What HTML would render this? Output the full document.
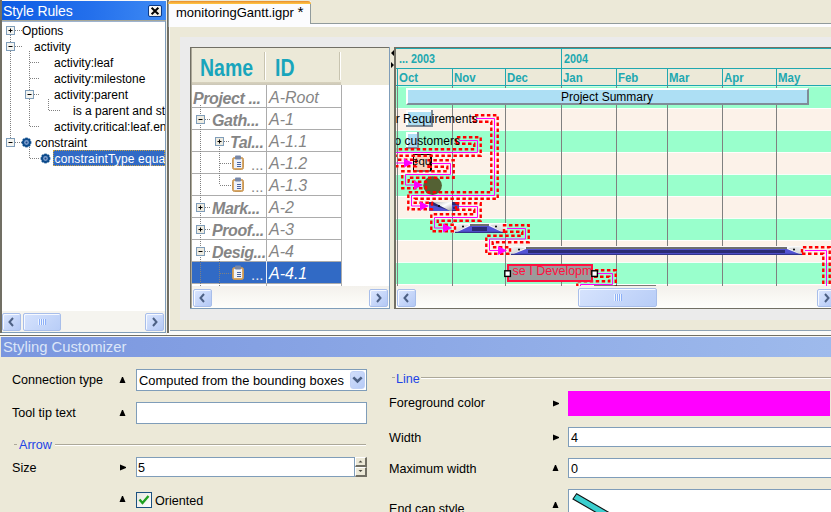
<!DOCTYPE html>
<html><head><meta charset="utf-8">
<style>
*{margin:0;padding:0;box-sizing:border-box}
html,body{width:831px;height:512px;overflow:hidden;background:#ECE9D8;font-family:"Liberation Sans",sans-serif}
.a{position:absolute}
.t{position:absolute;white-space:pre;line-height:normal}
</style></head><body>
<div class="a" style="left:0;top:0;width:831px;height:512px;overflow:hidden">


<!-- ===== LEFT PANEL: Style Rules ===== -->
<div class="a" style="left:0;top:0;width:2px;height:333px;background:#716F64"></div>
<div class="a" style="left:0;top:333px;width:170px;height:2px;background:#FCFCFA"></div>
<div class="a" style="left:2px;top:0;width:164px;height:1px;background:#F8F8F8"></div>
<div class="a" style="left:2px;top:1px;width:164px;height:19px;background:linear-gradient(to right,#0D5CE4,#2470EC 55%,#3E8AF4)"></div>
<div class="t" style="left:3px;top:3px;font-size:14px;color:#fff;letter-spacing:-0.1px">Style Rules</div>
<div class="a" style="left:148px;top:5px;width:14px;height:12px;background:linear-gradient(135deg,#FFFFFF,#ECE8DA);border:1.5px solid #0C3A86;border-radius:2px"></div>
<svg class="a" style="left:148px;top:5px" width="14" height="12"><path d="M3.6 2.8 L10.4 9.2 M10.4 2.8 L3.6 9.2" stroke="#000" stroke-width="2"/></svg>
<div class="a" style="left:2px;top:20px;width:164px;height:1px;background:#A8A898"></div>
<div class="a" style="left:2px;top:21px;width:164px;height:1px;background:#9DB3D0"></div>
<div class="a" style="left:2px;top:22px;width:163px;height:289px;background:#fff"></div>
<div class="a" style="left:165px;top:21px;width:1px;height:312px;background:#7F9DB9"></div>
<div class="a" style="left:166px;top:0;width:1px;height:335px;background:#F0EFE8"></div>
<div class="a" style="left:167px;top:0;width:2px;height:333px;background:#716F64"></div>
<div class="a" style="left:169px;top:0;width:1px;height:335px;background:#FBFBF8"></div>

<!-- tree -->
<svg class="a" style="left:2px;top:22px" width="163" height="150">
 <g stroke="#808080" stroke-width="1" stroke-dasharray="1 1" fill="none">
  <path d="M8.5 13 V121"/>
  <path d="M13 8.5 H20"/>
  <path d="M13 24.5 H20"/>
  <path d="M27.5 29 V105"/>
  <path d="M28 40.5 H38 M28 56.5 H38 M32 72.5 H38 M28 104.5 H38"/>
  <path d="M46.5 77 V89 M47 88.5 H58"/>
  <path d="M13 120.5 H20"/>
  <path d="M27.5 125 V137 M28 136.5 H38"/>
 </g>
 <!-- expand boxes -->
 <g>
  <rect x="4.5" y="4.5" width="8" height="8" fill="#F4F4F0" stroke="#7F9DB9"/>
  <path d="M6.5 8.5 H10.5 M8.5 6.5 V10.5" stroke="#000"/>
  <rect x="4.5" y="20.5" width="8" height="8" fill="#F4F4F0" stroke="#7F9DB9"/>
  <path d="M6.5 24.5 H10.5" stroke="#000"/>
  <rect x="23.5" y="68.5" width="8" height="8" fill="#F4F4F0" stroke="#7F9DB9"/>
  <path d="M25.5 72.5 H29.5" stroke="#000"/>
  <rect x="4.5" y="116.5" width="8" height="8" fill="#F4F4F0" stroke="#7F9DB9"/>
  <path d="M6.5 120.5 H10.5" stroke="#000"/>
 </g>
 <!-- gear icons -->
 <g transform="translate(24.5,120.5)"><rect x="-1.2" y="-4.7" width="2.4" height="9.4" fill="#0E4C8C" transform="rotate(0)"/><rect x="-1.2" y="-4.7" width="2.4" height="9.4" fill="#0E4C8C" transform="rotate(45)"/><rect x="-1.2" y="-4.7" width="2.4" height="9.4" fill="#0E4C8C" transform="rotate(90)"/><rect x="-1.2" y="-4.7" width="2.4" height="9.4" fill="#0E4C8C" transform="rotate(135)"/><rect x="-1.2" y="-4.7" width="2.4" height="9.4" fill="#0E4C8C" transform="rotate(180)"/><rect x="-1.2" y="-4.7" width="2.4" height="9.4" fill="#0E4C8C" transform="rotate(225)"/><rect x="-1.2" y="-4.7" width="2.4" height="9.4" fill="#0E4C8C" transform="rotate(270)"/><rect x="-1.2" y="-4.7" width="2.4" height="9.4" fill="#0E4C8C" transform="rotate(315)"/><circle r="3.6" fill="#0E4C8C"/><circle r="2.4" fill="#7F9FCF"/><circle r="1" fill="#1E4A88"/></g>
 <g transform="translate(43.5,136.5)"><rect x="-1.2" y="-4.7" width="2.4" height="9.4" fill="#0E4C8C" transform="rotate(0)"/><rect x="-1.2" y="-4.7" width="2.4" height="9.4" fill="#0E4C8C" transform="rotate(45)"/><rect x="-1.2" y="-4.7" width="2.4" height="9.4" fill="#0E4C8C" transform="rotate(90)"/><rect x="-1.2" y="-4.7" width="2.4" height="9.4" fill="#0E4C8C" transform="rotate(135)"/><rect x="-1.2" y="-4.7" width="2.4" height="9.4" fill="#0E4C8C" transform="rotate(180)"/><rect x="-1.2" y="-4.7" width="2.4" height="9.4" fill="#0E4C8C" transform="rotate(225)"/><rect x="-1.2" y="-4.7" width="2.4" height="9.4" fill="#0E4C8C" transform="rotate(270)"/><rect x="-1.2" y="-4.7" width="2.4" height="9.4" fill="#0E4C8C" transform="rotate(315)"/><circle r="3.6" fill="#0E4C8C"/><circle r="2.4" fill="#7F9FCF"/><circle r="1" fill="#1E4A88"/></g>
</svg>
<div class="a" style="left:2px;top:22px;width:163px;height:289px;overflow:hidden">
<div class="t" style="left:20px;top:2px;font-size:12px;color:#000">Options</div>
<div class="t" style="left:32px;top:18px;font-size:12px;color:#000">activity</div>
<div class="t" style="left:52px;top:34px;font-size:12px;color:#000">activity:leaf</div>
<div class="t" style="left:52px;top:50px;font-size:12px;color:#000">activity:milestone</div>
<div class="t" style="left:52px;top:66px;font-size:12px;color:#000">activity:parent</div>
<div class="t" style="left:71px;top:82px;font-size:12px;color:#000">is a parent and st</div>
<div class="t" style="left:52px;top:98px;font-size:12px;color:#000">activity.critical:leaf.end</div>
<div class="t" style="left:33px;top:114px;font-size:12px;color:#000">constraint</div>
<div class="a" style="left:51px;top:128px;width:112px;height:16px;background:#316AC5;border:1px dotted #C8A040"></div>
<div class="t" style="left:52.5px;top:130px;font-size:12px;letter-spacing:0.15px;color:#fff">constraintType equals</div>
</div>
<div class="a" style="left:166px;top:0;width:1px;height:335px;background:#F0EFE8"></div>
<div class="a" style="left:2px;top:22px;width:2px;height:289px;background:#fff"></div>

<!-- left scrollbar -->
<div class="a" style="left:2px;top:311px;width:163px;height:21px;background:#F5F4EF"></div>
<div class="a" style="left:2px;top:313px;width:19px;height:18px;background:linear-gradient(135deg,#DCE7FE,#B3C8F5);border:1px solid #A8BEEA;border-radius:2px;box-shadow:inset 1px 1px 0 #F6F9FF"></div>
<svg class="a" style="left:2px;top:313px" width="19" height="18"><path d="M11 5 L7.5 9 L11 13" stroke="#4D6185" stroke-width="2" fill="none"/></svg>
<div class="a" style="left:23px;top:313px;width:38px;height:18px;background:linear-gradient(135deg,#D6E3FD,#B8CDF7);border:1px solid #A8BEEA;border-radius:2px;box-shadow:inset 1px 1px 0 #F6F9FF"></div>
<svg class="a" style="left:23px;top:313px" width="38" height="18"><path d="M15.5 6 V12 M17.5 6 V12 M19.5 6 V12 M21.5 6 V12" stroke="#EEF4FE" stroke-width="1"/><path d="M16.5 6 V12 M18.5 6 V12 M20.5 6 V12 M22.5 6 V12" stroke="#8CB0F8" stroke-width="1"/></svg>
<div class="a" style="left:145px;top:313px;width:19px;height:18px;background:linear-gradient(135deg,#DCE7FE,#B3C8F5);border:1px solid #A8BEEA;border-radius:2px;box-shadow:inset 1px 1px 0 #F6F9FF"></div>
<svg class="a" style="left:145px;top:313px" width="19" height="18"><path d="M8 5 L11.5 9 L8 13" stroke="#4D6185" stroke-width="2" fill="none"/></svg>
<div class="a" style="left:2px;top:332px;width:164px;height:1px;background:#7F9DB9"></div>

<!-- ===== TAB AREA ===== -->
<div class="a" style="left:170px;top:0;width:661px;height:23px;background:#ECE9D8"></div>
<div class="a" style="left:168px;top:1px;width:143px;height:26px;background:#FCFCFE;border-left:1px solid #919B9C"></div>
<div class="a" style="left:310px;top:3px;width:1px;height:21px;background:#919B9C"></div>
<div class="a" style="left:168px;top:1px;width:143px;height:3px;background:linear-gradient(#E68B2C,#F8B240 60%,#FFC83C);border-radius:3px 3px 0 0"></div>

<div class="t" style="left:176px;top:5px;font-size:13px;color:#000">monitoringGantt.igpr</div><div class="t" style="left:297.5px;top:3px;font-size:15.5px;color:#000">*</div>
<div class="a" style="left:311px;top:23px;width:520px;height:1px;background:#919B9C"></div>
<div class="a" style="left:311px;top:24px;width:520px;height:3px;background:#FCFCFE"></div>
<div class="a" style="left:170px;top:27px;width:661px;height:303px;background:#ECE9D8"></div>
<div class="a" style="left:180px;top:37px;width:651px;height:283px;background:#EBEBEB"></div>
<div class="a" style="left:170px;top:330px;width:661px;height:1px;background:#8DA2B4"></div>
<div class="a" style="left:170px;top:331px;width:661px;height:4px;background:#FBFBF8"></div>
<div class="a" style="left:0;top:335px;width:831px;height:1px;background:#716F64"></div>
<div class="a" style="left:0;top:336px;width:831px;height:1px;background:#F8F8F4"></div>

<!-- ===== TABLE ===== -->
<div class="a" style="left:190px;top:47px;width:200px;height:262px;background:#fff;border-top:1px solid #716F64;border-left:1px solid #716F64;"></div>
<div class="a" style="left:191px;top:48px;width:1px;height:260px;background:#ACA899"></div>
<div class="a" style="left:389px;top:47px;width:1px;height:262px;background:#7F9DB9"></div>
<div class="a" style="left:190px;top:308px;width:200px;height:1px;background:#7F9DB9"></div>
<!-- header -->
<div class="a" style="left:192px;top:48px;width:197px;height:37px;background:#ECE9D8"></div>
<div class="a" style="left:192px;top:82px;width:149px;height:3px;background:linear-gradient(#D8D2BD,#CBC7B8)"></div>
<div class="a" style="left:264px;top:52px;width:1px;height:28px;background:#C8C4B0"></div>
<div class="a" style="left:265px;top:52px;width:1px;height:28px;background:#fff"></div>
<div class="a" style="left:339px;top:52px;width:1px;height:28px;background:#C8C4B0"></div>
<div class="a" style="left:340px;top:52px;width:1px;height:28px;background:#fff"></div>
<div class="t" style="left:200px;top:55px;font-size:23.5px;font-weight:bold;color:#18A5BC;transform:scaleX(0.83);transform-origin:0 0">Name</div>
<div class="t" style="left:275px;top:55px;font-size:23.5px;font-weight:bold;color:#18A5BC;transform:scaleX(0.83);transform-origin:0 0">ID</div>


<div class="a" style="left:192px;top:85px;width:197px;height:201px;overflow:hidden;background:#fff">
<div class="a" style="left:0;top:176px;width:149px;height:22px;background:#316AC5"></div>
<div class="a" style="left:0;top:22px;width:150px;height:1px;background:#ACACAC"></div>
<div class="a" style="left:0;top:44px;width:150px;height:1px;background:#ACACAC"></div>
<div class="a" style="left:0;top:66px;width:150px;height:1px;background:#ACACAC"></div>
<div class="a" style="left:0;top:88px;width:150px;height:1px;background:#ACACAC"></div>
<div class="a" style="left:0;top:110px;width:150px;height:1px;background:#ACACAC"></div>
<div class="a" style="left:0;top:132px;width:150px;height:1px;background:#ACACAC"></div>
<div class="a" style="left:0;top:154px;width:150px;height:1px;background:#ACACAC"></div>
<div class="a" style="left:0;top:176px;width:150px;height:1px;background:#ACACAC"></div>
<div class="a" style="left:0;top:198px;width:150px;height:1px;background:#ACACAC"></div>
<div class="a" style="left:74px;top:0;width:1px;height:201px;background:#ACACAC"></div>
<div class="a" style="left:149px;top:0;width:1px;height:201px;background:#ACACAC"></div>
<div class="a" style="left:74px;top:176px;width:1px;height:22px;background:#E8EEF8"></div>
<svg class="a" style="left:0;top:0" width="150" height="201">
<g stroke="#808080" stroke-dasharray="1 1" fill="none">
<path d="M8.5 20 V201"/>
<path d="M27.5 58 V100"/>
<path d="M27.5 174 V201"/>
<path d="M13 34.5 H19"/>
<path d="M32 56.5 H38"/>
<path d="M28 78.5 H39"/>
<path d="M28 100.5 H39"/>
<path d="M13 122.5 H19"/>
<path d="M13 144.5 H19"/>
<path d="M13 166.5 H19"/>
<path d="M28 188.5 H39"/>
</g>
<rect x="4.5" y="30.5" width="8" height="8" fill="#EEEBE0" stroke="#7F9DB9"/>
<path d="M6.5 34.5 H10.5" stroke="#000"/>
<rect x="23.5" y="52.5" width="8" height="8" fill="#EEEBE0" stroke="#7F9DB9"/>
<path d="M25.5 56.5 H29.5" stroke="#000"/>
<path d="M27.5 54.5 V58.5" stroke="#000"/>
<rect x="40.5" y="72.5" width="11" height="12" rx="2" fill="#D8A868" stroke="#C89858"/>
<rect x="42" y="74" width="8" height="9" fill="#EEF2FA"/>
<rect x="43" y="70.5" width="6" height="4" rx="1" fill="#7888A8"/>
<path d="M45 77.5 H49 M45 79.5 H49 M45 81.5 H49" stroke="#4A62A0"/>
<rect x="40.5" y="94.5" width="11" height="12" rx="2" fill="#D8A868" stroke="#C89858"/>
<rect x="42" y="96" width="8" height="9" fill="#EEF2FA"/>
<rect x="43" y="92.5" width="6" height="4" rx="1" fill="#7888A8"/>
<path d="M45 99.5 H49 M45 101.5 H49 M45 103.5 H49" stroke="#4A62A0"/>
<rect x="4.5" y="118.5" width="8" height="8" fill="#EEEBE0" stroke="#7F9DB9"/>
<path d="M6.5 122.5 H10.5" stroke="#000"/>
<path d="M8.5 120.5 V124.5" stroke="#000"/>
<rect x="4.5" y="140.5" width="8" height="8" fill="#EEEBE0" stroke="#7F9DB9"/>
<path d="M6.5 144.5 H10.5" stroke="#000"/>
<path d="M8.5 142.5 V146.5" stroke="#000"/>
<rect x="4.5" y="162.5" width="8" height="8" fill="#EEEBE0" stroke="#7F9DB9"/>
<path d="M6.5 166.5 H10.5" stroke="#000"/>
<rect x="40.5" y="182.5" width="11" height="12" rx="2" fill="#D8A868" stroke="#C89858"/>
<rect x="42" y="184" width="8" height="9" fill="#EEF2FA"/>
<rect x="43" y="180.5" width="6" height="4" rx="1" fill="#7888A8"/>
<path d="M45 187.5 H49 M45 189.5 H49 M45 191.5 H49" stroke="#4A62A0"/>
</svg>
<div class="t" style="left:1px;top:5px;font-size:16px;letter-spacing:-0.4px;font-weight:bold;font-style:italic;color:#858585">Project ...</div>
<div class="t" style="left:77px;top:4px;font-size:16px;font-style:italic;color:#858585">A-Root</div>
<div class="t" style="left:20px;top:27px;font-size:16px;letter-spacing:-0.4px;font-weight:bold;font-style:italic;color:#858585">Gath...</div>
<div class="t" style="left:77px;top:26px;font-size:16px;font-style:italic;color:#858585">A-1</div>
<div class="t" style="left:38px;top:49px;font-size:16px;letter-spacing:-0.4px;font-weight:bold;font-style:italic;color:#858585">Tal...</div>
<div class="t" style="left:77px;top:48px;font-size:16px;font-style:italic;color:#858585">A-1.1</div>
<div class="t" style="left:59px;top:71px;font-size:15px;color:#858585">...</div>
<div class="t" style="left:77px;top:70px;font-size:16px;font-style:italic;color:#858585">A-1.2</div>
<div class="t" style="left:59px;top:93px;font-size:15px;color:#858585">...</div>
<div class="t" style="left:77px;top:92px;font-size:16px;font-style:italic;color:#858585">A-1.3</div>
<div class="t" style="left:20px;top:115px;font-size:16px;letter-spacing:-0.4px;font-weight:bold;font-style:italic;color:#858585">Mark...</div>
<div class="t" style="left:77px;top:114px;font-size:16px;font-style:italic;color:#858585">A-2</div>
<div class="t" style="left:20px;top:137px;font-size:16px;letter-spacing:-0.4px;font-weight:bold;font-style:italic;color:#858585">Proof...</div>
<div class="t" style="left:77px;top:136px;font-size:16px;font-style:italic;color:#858585">A-3</div>
<div class="t" style="left:20px;top:159px;font-size:16px;letter-spacing:-0.4px;font-weight:bold;font-style:italic;color:#858585">Desig...</div>
<div class="t" style="left:77px;top:158px;font-size:16px;font-style:italic;color:#858585">A-4</div>
<div class="t" style="left:59px;top:181px;font-size:15px;color:#E8E8F0">...</div>
<div class="t" style="left:77px;top:180px;font-size:16px;font-style:italic;color:#fff">A-4.1</div>
</div>
<div class="a" style="left:192px;top:286px;width:197px;height:22px;background:linear-gradient(#F3F1EC,#FEFEFB)"></div>
<div class="a" style="left:193px;top:289px;width:19px;height:18px;background:linear-gradient(135deg,#DCE7FE,#B3C8F5);border:1px solid #A8BEEA;border-radius:2px;box-shadow:inset 1px 1px 0 #F6F9FF"></div>
<svg class="a" style="left:193px;top:289px" width="19" height="18"><path d="M11 5 L7.5 9 L11 13" stroke="#4D6185" stroke-width="2" fill="none"/></svg>
<div class="a" style="left:369px;top:289px;width:19px;height:18px;background:linear-gradient(135deg,#DCE7FE,#B3C8F5);border:1px solid #A8BEEA;border-radius:2px;box-shadow:inset 1px 1px 0 #F6F9FF"></div>
<svg class="a" style="left:369px;top:289px" width="19" height="18"><path d="M8 5 L11.5 9 L8 13" stroke="#4D6185" stroke-width="2" fill="none"/></svg>
<div class="a" style="left:390px;top:47px;width:4px;height:262px;background:#ECE9D8"></div>
<svg class="a" style="left:390px;top:48px" width="5" height="24"><path d="M4 2 L1 5 L4 8 Z M1 14 L4 17 L1 20 Z" fill="#000"/></svg>
<div class="a" style="left:394px;top:47px;width:437px;height:262px;background:#ECE9D8;border-top:1px solid #716F64;border-left:2px solid #716F64;border-bottom:1px solid #716F64"></div>
<svg class="a" style="left:396px;top:48px" width="435" height="38">
<rect x="0" y="0" width="435" height="38" fill="#ECE9D8"/>
<path d="M0 0.5 H435 M0 20.5 H435 M0 37.5 H435" stroke="#20A8B0"/>
<path d="M1.5 20 V38" stroke="#20A8B0"/>
<path d="M56.5 20 V38" stroke="#20A8B0"/>
<path d="M109.5 20 V38" stroke="#20A8B0"/>
<path d="M165.5 20 V38" stroke="#20A8B0"/>
<path d="M220.5 20 V38" stroke="#20A8B0"/>
<path d="M271.5 20 V38" stroke="#20A8B0"/>
<path d="M326.5 20 V38" stroke="#20A8B0"/>
<path d="M380.5 20 V38" stroke="#20A8B0"/>
<path d="M165.5 0 V20" stroke="#20A8B0"/>
<path d="M1.5 20 V38" stroke="#20A8B0"/>
</svg>
<div class="t" style="left:399px;top:51px;font-size:13px;font-weight:bold;color:#20A8B0;transform:scaleX(0.83);transform-origin:0 0">... 2003</div>
<div class="t" style="left:564px;top:51px;font-size:13px;font-weight:bold;color:#20A8B0;transform:scaleX(0.83);transform-origin:0 0">2004</div>
<div class="t" style="left:399px;top:70px;font-size:13px;font-weight:bold;color:#20A8B0;transform:scaleX(0.88);transform-origin:0 0">Oct</div>
<div class="t" style="left:454px;top:70px;font-size:13px;font-weight:bold;color:#20A8B0;transform:scaleX(0.88);transform-origin:0 0">Nov</div>
<div class="t" style="left:507px;top:70px;font-size:13px;font-weight:bold;color:#20A8B0;transform:scaleX(0.88);transform-origin:0 0">Dec</div>
<div class="t" style="left:563px;top:70px;font-size:13px;font-weight:bold;color:#20A8B0;transform:scaleX(0.88);transform-origin:0 0">Jan</div>
<div class="t" style="left:618px;top:70px;font-size:13px;font-weight:bold;color:#20A8B0;transform:scaleX(0.88);transform-origin:0 0">Feb</div>
<div class="t" style="left:669px;top:70px;font-size:13px;font-weight:bold;color:#20A8B0;transform:scaleX(0.88);transform-origin:0 0">Mar</div>
<div class="t" style="left:724px;top:70px;font-size:13px;font-weight:bold;color:#20A8B0;transform:scaleX(0.88);transform-origin:0 0">Apr</div>
<div class="t" style="left:778px;top:70px;font-size:13px;font-weight:bold;color:#20A8B0;transform:scaleX(0.88);transform-origin:0 0">May</div>
<svg class="a" style="left:396px;top:86px" width="435" height="200">
<rect x="0" y="0" width="435" height="200" fill="#FCF2E9"/>
<rect x="0" y="0" width="435" height="22" fill="#99FFCC"/>
<rect x="0" y="44" width="435" height="22" fill="#99FFCC"/>
<rect x="0" y="88" width="435" height="22" fill="#99FFCC"/>
<rect x="0" y="132" width="435" height="22" fill="#99FFCC"/>
<rect x="0" y="176" width="435" height="22" fill="#99FFCC"/>
<rect x="0" y="0" width="435" height="1" fill="#FFFFFF" opacity="0.5"/>
<rect x="0" y="22" width="435" height="1" fill="#FFFFFF" opacity="0.9"/>
<rect x="0" y="44" width="435" height="1" fill="#FFFFFF" opacity="0.9"/>
<rect x="0" y="66" width="435" height="1" fill="#FFFFFF" opacity="0.9"/>
<rect x="0" y="88" width="435" height="1" fill="#FFFFFF" opacity="0.9"/>
<rect x="0" y="110" width="435" height="1" fill="#FFFFFF" opacity="0.9"/>
<rect x="0" y="132" width="435" height="1" fill="#FFFFFF" opacity="0.9"/>
<rect x="0" y="154" width="435" height="1" fill="#FFFFFF" opacity="0.9"/>
<rect x="0" y="176" width="435" height="1" fill="#FFFFFF" opacity="0.9"/>
<rect x="0" y="198" width="435" height="1" fill="#FFFFFF" opacity="0.9"/>
<path d="M1.5 0 V200" stroke="#808080"/>
<path d="M56.5 0 V200" stroke="#808080"/>
<path d="M109.5 0 V200" stroke="#808080"/>
<path d="M165.5 0 V200" stroke="#808080"/>
<path d="M220.5 0 V200" stroke="#808080"/>
<path d="M271.5 0 V200" stroke="#808080"/>
<path d="M326.5 0 V200" stroke="#808080"/>
<path d="M380.5 0 V200" stroke="#808080"/>
</svg>
<div class="a" style="left:406px;top:88px;width:403px;height:17px;background:#ADDFF4;border-top:2px solid #fff;border-left:2px solid #fff;border-bottom:2px solid #7F8C98;border-right:2px solid #7F8C98"></div>
<div class="t" style="left:561px;top:90px;font-size:12px;color:#000">Project Summary</div>
<div class="a" style="left:396px;top:286px;width:435px;height:22px;background:linear-gradient(#F3F1EC,#FEFEFB)"></div>
<div class="a" style="left:397px;top:289px;width:19px;height:18px;background:linear-gradient(135deg,#DCE7FE,#B3C8F5);border:1px solid #A8BEEA;border-radius:2px;box-shadow:inset 1px 1px 0 #F6F9FF"></div>
<svg class="a" style="left:397px;top:289px" width="19" height="18"><path d="M11 5 L7.5 9 L11 13" stroke="#4D6185" stroke-width="2" fill="none"/></svg>
<div class="a" style="left:578px;top:288px;width:79px;height:19px;background:linear-gradient(135deg,#D6E3FD,#B8CDF7);border:1px solid #A8BEEA;border-radius:2px;box-shadow:inset 1px 1px 0 #F6F9FF"></div>
<svg class="a" style="left:578px;top:288px" width="79" height="19"><path d="M36.5 6 V13 M38.5 6 V13 M40.5 6 V13 M42.5 6 V13" stroke="#EEF4FE"/><path d="M37.5 6 V13 M39.5 6 V13 M41.5 6 V13 M43.5 6 V13" stroke="#8CB0F8"/></svg>
<div class="a" style="left:817px;top:289px;width:19px;height:18px;background:linear-gradient(135deg,#DCE7FE,#B3C8F5);border:1px solid #A8BEEA;border-radius:2px;box-shadow:inset 1px 1px 0 #F6F9FF"></div>
<svg class="a" style="left:817px;top:289px" width="19" height="18"><path d="M8 5 L11.5 9 L8 13" stroke="#4D6185" stroke-width="2" fill="none"/></svg>
<svg class="a" style="left:396px;top:86px" width="435" height="200"><g transform="translate(-396,-86)">
<rect x="406" y="110" width="27" height="17" fill="#7F8C98"/><rect x="406" y="110" width="25" height="15" fill="#fff"/><rect x="408" y="112" width="23" height="13" fill="#ADDFF4"/>
<rect x="406" y="132" width="13" height="17" fill="#7F8C98"/><rect x="406" y="132" width="11" height="15" fill="#fff"/><rect x="408" y="134" width="9" height="13" fill="#ADDFF4"/>
<rect x="413.5" y="154.5" width="17.5" height="16.5" fill="#F8D6BC" stroke="#000" stroke-width="1"/><rect x="430" y="156" width="2" height="15" fill="#000"/>
<circle cx="432.6" cy="185.6" r="9.3" fill="#546134"/>
<rect x="429" y="202" width="30" height="9" fill="#2C2C74"/>
<path d="M429 204 L429 211 L451 211 Z" fill="#5454D4"/>
<defs><linearGradient id="mk" x1="0" y1="0" x2="1" y2="1"><stop offset="0" stop-color="#B8B8B8"/><stop offset="0.5" stop-color="#FFFFFF"/><stop offset="1" stop-color="#A0A0A0"/></linearGradient></defs>
<path d="M433 202 L452 202 L452 211 L450 211 Z" fill="url(#mk)"/>
<rect x="452" y="205" width="7" height="5" fill="#4848C0"/>
<rect x="453" y="207" width="4" height="2" fill="#2C2C74"/>
<circle cx="439" cy="206" r="1" fill="#000"/>
<defs><linearGradient id="sv452" x1="0" y1="0" x2="1" y2="1"><stop offset="0" stop-color="#FFFFFF"/><stop offset="0.6" stop-color="#D8D8D8"/><stop offset="1" stop-color="#9A9A9A"/></linearGradient><linearGradient id="svr452" x1="1" y1="0" x2="0" y2="1"><stop offset="0" stop-color="#FFFFFF"/><stop offset="0.6" stop-color="#D8D8D8"/><stop offset="1" stop-color="#9A9A9A"/></linearGradient></defs>
<rect x="452" y="223" width="55" height="10" fill="#FAFAFA"/>
<path d="M452 223 L469 225 L455 233 L452 233 Z" fill="url(#sv452)"/>
<path d="M507 223 L490 225 L504 233 L507 233 Z" fill="url(#svr452)"/>
<path d="M455 233 L470 226 L489 226 L504 233 Z" fill="#5454D4"/>
<rect x="470" y="224" width="19" height="2" fill="#6E6E6E"/>
<rect x="472" y="227" width="15" height="4" fill="#2C2C74"/>
<rect x="455" y="231.8" width="49" height="1.2" fill="#34348A"/>
<circle cx="463" cy="226.5" r="1" fill="#000"/><circle cx="496" cy="226.5" r="1" fill="#000"/>
<defs><linearGradient id="sv508" x1="0" y1="0" x2="1" y2="1"><stop offset="0" stop-color="#FFFFFF"/><stop offset="0.6" stop-color="#D8D8D8"/><stop offset="1" stop-color="#9A9A9A"/></linearGradient><linearGradient id="svr508" x1="1" y1="0" x2="0" y2="1"><stop offset="0" stop-color="#FFFFFF"/><stop offset="0.6" stop-color="#D8D8D8"/><stop offset="1" stop-color="#9A9A9A"/></linearGradient></defs>
<rect x="508" y="246" width="297" height="9" fill="#FAFAFA"/>
<path d="M508 246 L525 248 L511 255 L508 255 Z" fill="url(#sv508)"/>
<path d="M805 246 L788 248 L802 255 L805 255 Z" fill="url(#svr508)"/>
<path d="M511 255 L526 249 L787 249 L802 255 Z" fill="#5454D4"/>
<rect x="526" y="247" width="261" height="2" fill="#6E6E6E"/>
<rect x="528" y="250" width="257" height="3" fill="#2C2C74"/>
<rect x="511" y="253.8" width="291" height="1.2" fill="#34348A"/>
<circle cx="519" cy="249.5" r="1" fill="#000"/><circle cx="794" cy="249.5" r="1" fill="#000"/>
<path d="M473.0 121.7 L491.3 121.7 L491.3 192.3 L408.3 192.3 L408.3 209.2 L432.0 209.2 L432.0 202.8 L414.7 202.8 L414.7 198.7 L497.7 198.7 L497.7 115.3 L473.0 115.3 Z" fill="none" stroke="#FF0000" stroke-width="2.4" stroke-dasharray="3.5 2.5"/>
<path d="M456.0 143.7 L474.3 143.7 L474.3 149.3 L377.0 149.3 L377.0 155.7 L480.7 155.7 L480.7 137.3 L456.0 137.3 Z" fill="none" stroke="#FF0000" stroke-width="2.4" stroke-dasharray="3.5 2.5"/>
<path d="M377.0 166.2 L416.0 166.2 L416.0 159.8 L377.0 159.8 Z" fill="none" stroke="#FF0000" stroke-width="2.4" stroke-dasharray="3.5 2.5"/>
<path d="M428.5 166.7 L447.3 166.7 L447.3 171.3 L402.3 171.3 L402.3 188.2 L426.0 188.2 L426.0 181.8 L408.7 181.8 L408.7 177.7 L453.7 177.7 L453.7 160.3 L428.5 160.3 Z" fill="none" stroke="#FF0000" stroke-width="2.4" stroke-dasharray="3.5 2.5"/>
<path d="M456.0 209.7 L474.3 209.7 L474.3 214.3 L431.3 214.3 L431.3 231.2 L455.0 231.2 L455.0 224.8 L437.7 224.8 L437.7 220.7 L480.7 220.7 L480.7 203.3 L456.0 203.3 Z" fill="none" stroke="#FF0000" stroke-width="2.4" stroke-dasharray="3.5 2.5"/>
<path d="M504.0 231.7 L522.3 231.7 L522.3 235.8 L486.3 235.8 L486.3 253.7 L510.0 253.7 L510.0 247.3 L492.7 247.3 L492.7 242.2 L528.7 242.2 L528.7 225.3 L504.0 225.3 Z" fill="none" stroke="#FF0000" stroke-width="2.4" stroke-dasharray="3.5 2.5"/>
<path d="M802.0 253.7 L823.3 253.7 L823.3 303.0 L829.7 303.0 L829.7 247.3 L802.0 247.3 Z" fill="none" stroke="#FF0000" stroke-width="2.4" stroke-dasharray="3.5 2.5"/>
<path d="M594.0 276.7 L609.3 276.7 L609.3 281.3 L577.3 281.3 L577.3 303.0 L583.7 303.0 L583.7 287.7 L615.7 287.7 L615.7 270.3 L594.0 270.3 Z" fill="none" stroke="#FF0000" stroke-width="2.4" stroke-dasharray="3.5 2.5"/>
<path d="M476 118.5 L494.5 118.5 L494.5 195.5 L411.5 195.5 L411.5 206 L428 206" fill="none" stroke="#FF00FF" stroke-width="1"/>
<path d="M420 201.5 L429 206 L420 210.5 Z" fill="#FF00FF"/>
<path d="M459 140.5 L477.5 140.5 L477.5 152.5 L380 152.5" fill="none" stroke="#FF00FF" stroke-width="1"/>
<path d="M380 163 L412 163" fill="none" stroke="#FF00FF" stroke-width="1"/>
<path d="M404 158.5 L413 163 L404 167.5 Z" fill="#FF00FF"/>
<path d="M431.5 163.5 L450.5 163.5 L450.5 174.5 L405.5 174.5 L405.5 185 L422 185" fill="none" stroke="#FF00FF" stroke-width="1"/>
<path d="M414 180.5 L423 185 L414 189.5 Z" fill="#FF00FF"/>
<path d="M459 206.5 L477.5 206.5 L477.5 217.5 L434.5 217.5 L434.5 228 L451 228" fill="none" stroke="#FF00FF" stroke-width="1"/>
<path d="M443 223.5 L452 228 L443 232.5 Z" fill="#FF00FF"/>
<path d="M507 228.5 L525.5 228.5 L525.5 239 L489.5 239 L489.5 250.5 L506 250.5" fill="none" stroke="#FF00FF" stroke-width="1"/>
<path d="M498 246.0 L507 250.5 L498 255.0 Z" fill="#FF00FF"/>
<path d="M805 250.5 L826.5 250.5 L826.5 300" fill="none" stroke="#FF00FF" stroke-width="1"/>
<path d="M597 273.5 L612.5 273.5 L612.5 284.5 L580.5 284.5 L580.5 300" fill="none" stroke="#FF00FF" stroke-width="1"/>
<rect x="508" y="265" width="84" height="16" fill="#9B9B9B" stroke="#FF1040" stroke-width="2"/>
<rect x="504.8" y="270.8" width="5.6" height="5.6" fill="#fff" stroke="#000" stroke-width="1.4"/>
<rect x="591.8" y="270.8" width="5.6" height="5.6" fill="#fff" stroke="#000" stroke-width="1.4"/>
<rect x="594" y="285.5" width="62" height="1.5" fill="#000"/>
</g></svg>
<div class="a" style="left:396px;top:86px;width:435px;height:200px;overflow:hidden">
<div class="t" style="left:-10.3px;top:26px;font-size:12px;color:#000">for Requirements</div>
<div class="t" style="left:-4.8px;top:48px;font-size:12px;color:#000">to customers</div>
<div class="a" style="left:18px;top:69px;width:16px;height:16px;overflow:hidden"><div class="t" style="left:-2px;top:0px;font-size:11.5px;color:#000">equ</div></div>
<div class="a" style="left:113px;top:178px;width:82px;height:17px;overflow:hidden"><div class="t" style="left:3.6px;top:0px;font-size:12.5px;color:#FF1040">se I Development</div></div>
</div>
<!-- ===== BOTTOM: Styling Customizer ===== -->
<div class="a" style="left:0;top:337px;width:831px;height:175px;background:#ECE9D8"></div>
<div class="a" style="left:1px;top:337px;width:830px;height:20px;background:linear-gradient(to right,#7A96DF,#9EBAEC)"></div>
<div class="t" style="left:3px;top:339px;font-size:14.8px;color:#DCE6F8">Styling Customizer</div>

<div class="t" style="left:12px;top:373px;font-size:12.6px;color:#000">Connection type</div>
<div class="t" style="left:12px;top:406px;font-size:12.6px;color:#000">Tool tip text</div>
<div class="t" style="left:12px;top:461px;font-size:12.6px;color:#000">Size</div>
<svg class="a" style="left:118px;top:375px" width="10" height="10"><path d="M1.5 8 L4 2 L5 2 L7.5 8 Z" fill="#000"/></svg>
<svg class="a" style="left:118px;top:408px" width="10" height="10"><path d="M1.5 8 L4 2 L5 2 L7.5 8 Z" fill="#000"/></svg>
<svg class="a" style="left:118px;top:463px" width="10" height="10"><path d="M2 1.5 L8 4 L8 5 L2 7.5 Z" fill="#000"/></svg>
<svg class="a" style="left:118px;top:494px" width="10" height="10"><path d="M1.5 8 L4 2 L5 2 L7.5 8 Z" fill="#000"/></svg>

<div class="a" style="left:136px;top:369px;width:231px;height:22px;background:#fff;border:1px solid #7F9DB9"></div>
<div class="t" style="left:139px;top:373px;font-size:12.9px;color:#000">Computed from the bounding boxes</div>
<div class="a" style="left:350px;top:371px;width:15px;height:18px;background:linear-gradient(135deg,#D2DEFA,#B6CBF7);border:1px solid #C2D2F6;border-radius:3px"></div>
<svg class="a" style="left:350px;top:371px" width="15" height="18"><path d="M3.3 6.3 L7.5 10.5 L11.7 6.3" stroke="#4D6185" stroke-width="2.6" fill="none"/></svg>

<div class="a" style="left:136px;top:402px;width:231px;height:22px;background:#fff;border:1px solid #7F9DB9"></div>

<div class="a" style="left:14px;top:444px;width:3px;height:1px;background:#ACA899"></div>
<div class="t" style="left:19px;top:438px;font-size:12.6px;color:#2244E6">Arrow</div>
<div class="a" style="left:55px;top:444px;width:311px;height:1px;background:#ACA899"></div>
<div class="a" style="left:55px;top:445px;width:311px;height:1px;background:#FFFFFF"></div>

<div class="a" style="left:136px;top:457px;width:219px;height:20px;background:#fff;border:1px solid #7F9DB9"></div>
<div class="t" style="left:138px;top:461px;font-size:12.6px;color:#000">5</div>
<div class="a" style="left:355px;top:457px;width:12px;height:10px;background:#ECE9D8;border-style:solid;border-width:1px 2px 2px 1px;border-color:#FFFFFF #716F64 #716F64 #FFFFFF"></div>
<div class="a" style="left:355px;top:467px;width:12px;height:10px;background:#ECE9D8;border-style:solid;border-width:1px 2px 2px 1px;border-color:#FFFFFF #716F64 #716F64 #FFFFFF"></div>
<svg class="a" style="left:355px;top:457px" width="12" height="20"><path d="M3.5 5.5 L5.5 3.5 L7.5 5.5 Z M3.5 13 L5.5 15 L7.5 13 Z" fill="#4A4A40"/></svg>

<div class="a" style="left:136px;top:492px;width:16px;height:16px;background:linear-gradient(135deg,#E8E8E0,#FFFFFF);border:1px solid #1C5180"></div>
<svg class="a" style="left:136px;top:492px" width="16" height="16"><path d="M3.5 7.5 L6.5 11 L12.5 4" stroke="#21A121" stroke-width="2.4" fill="none"/></svg>
<div class="t" style="left:155px;top:494px;font-size:12.6px;color:#000">Oriented</div>

<!-- right column -->
<div class="a" style="left:392px;top:377px;width:3px;height:1px;background:#ACA899"></div>
<div class="t" style="left:396px;top:372px;font-size:12.6px;color:#2244E6">Line</div>
<div class="a" style="left:421px;top:377px;width:410px;height:1px;background:#ACA899"></div>
<div class="a" style="left:421px;top:378px;width:410px;height:1px;background:#FFFFFF"></div>

<div class="t" style="left:389px;top:396px;font-size:12.6px;color:#000">Foreground color</div>
<div class="t" style="left:389px;top:431px;font-size:12.6px;color:#000">Width</div>
<div class="t" style="left:389px;top:462px;font-size:12.6px;color:#000">Maximum width</div>
<div class="t" style="left:389px;top:502px;font-size:12.6px;color:#000">End cap style</div>
<svg class="a" style="left:551px;top:399px" width="10" height="10"><path d="M2 1.5 L8 4 L8 5 L2 7.5 Z" fill="#000"/></svg>
<svg class="a" style="left:551px;top:433px" width="10" height="10"><path d="M2 1.5 L8 4 L8 5 L2 7.5 Z" fill="#000"/></svg>
<svg class="a" style="left:551px;top:463px" width="10" height="10"><path d="M1.5 8 L4 2 L5 2 L7.5 8 Z" fill="#000"/></svg>
<svg class="a" style="left:551px;top:500px" width="10" height="10"><path d="M1.5 8 L4 2 L5 2 L7.5 8 Z" fill="#000"/></svg>

<div class="a" style="left:568px;top:391px;width:262px;height:25px;background:#FF00FF"></div>
<div class="a" style="left:568px;top:427px;width:270px;height:20px;background:#fff;border:1px solid #7F9DB9"></div>
<div class="t" style="left:571px;top:431px;font-size:12.6px;color:#000">4</div>
<div class="a" style="left:568px;top:458px;width:270px;height:20px;background:#fff;border:1px solid #7F9DB9"></div>
<div class="t" style="left:571px;top:462px;font-size:12.6px;color:#000">0</div>
<div class="a" style="left:568px;top:489px;width:270px;height:30px;background:#fff;border:1px solid #7F9DB9"></div>
<svg class="a" style="left:569px;top:490px" width="60" height="22"><path d="M4 9 L7.6 3.7 L49.6 28.1 L46 33.4 Z" fill="#3CCFCF" stroke="#111" stroke-width="1.1"/></svg>

</div>
</body></html>
